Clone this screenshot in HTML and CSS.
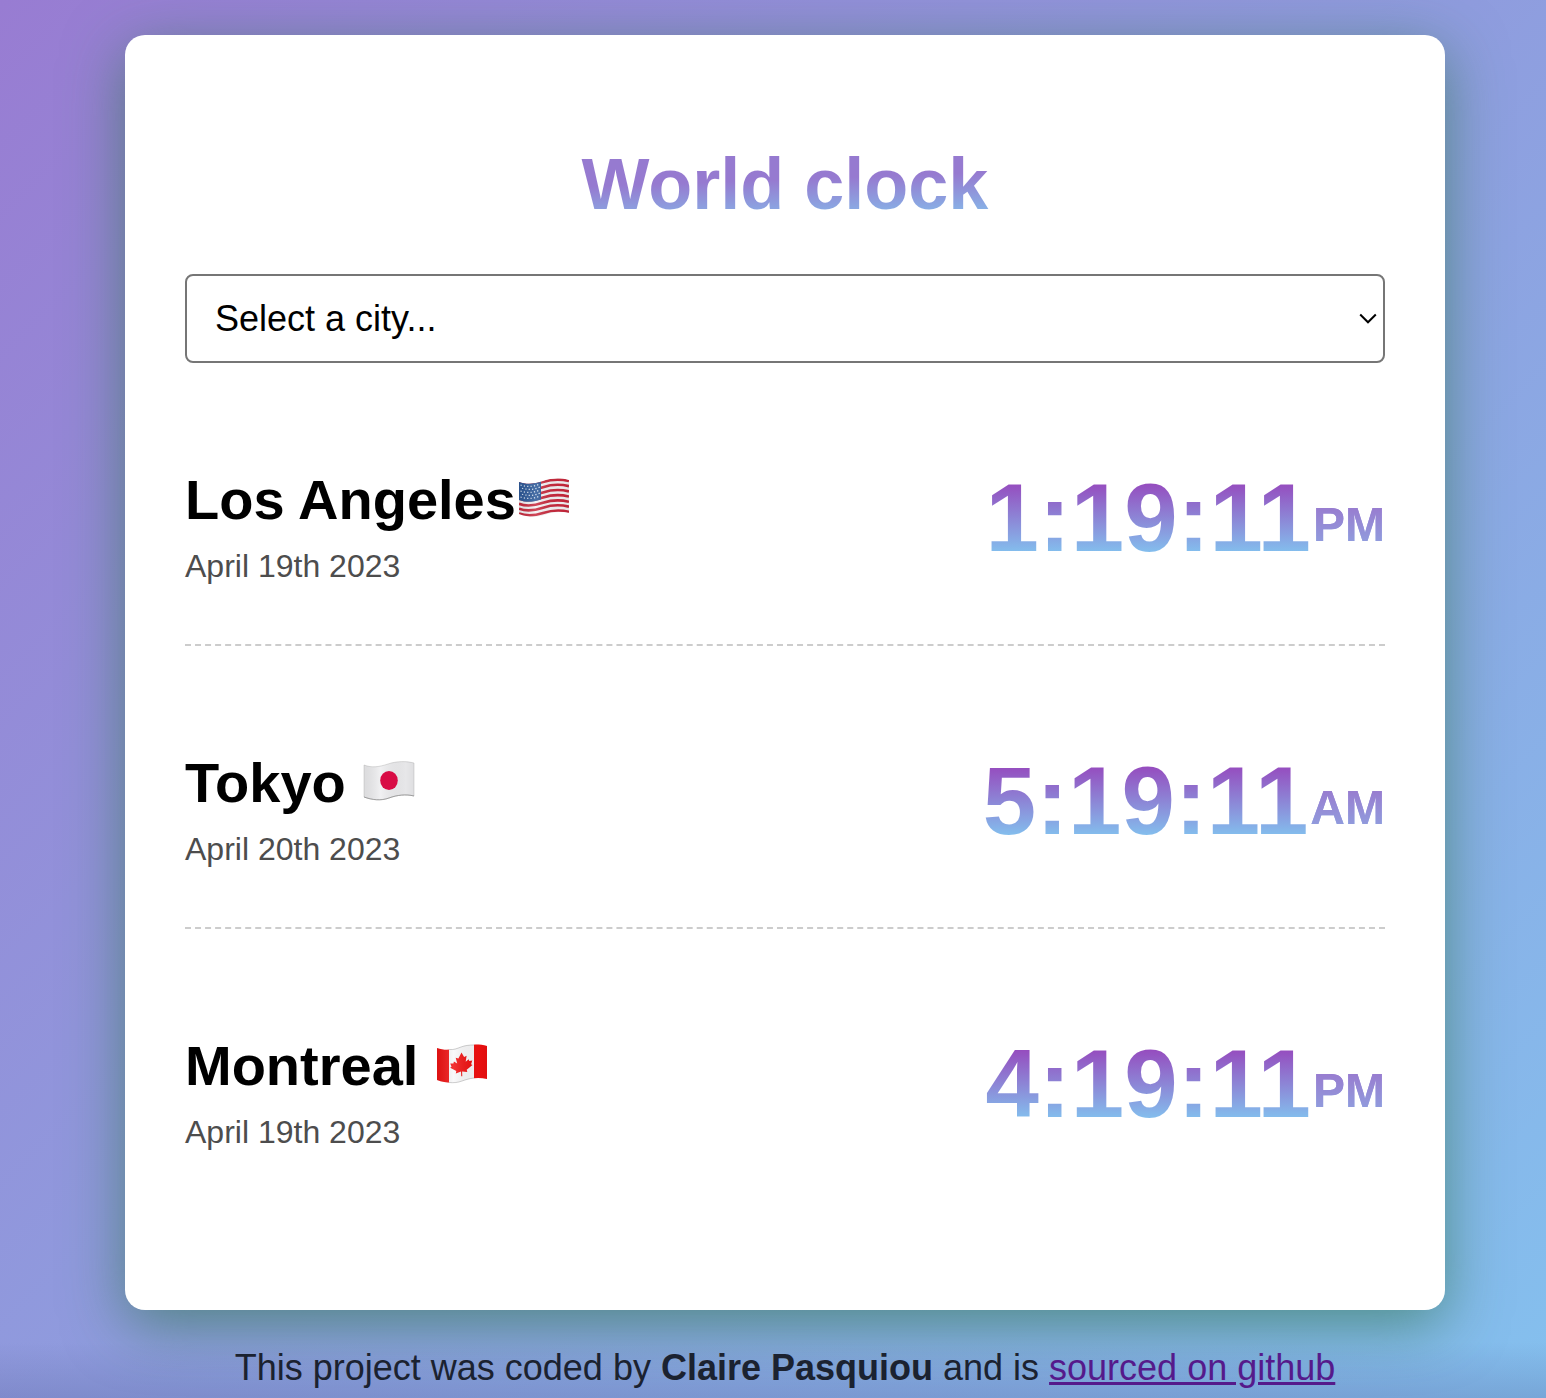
FILE: index.html
```html
<!DOCTYPE html>
<html lang="en">
<head>
  <meta charset="utf-8">
  <meta name="viewport" content="width=device-width, initial-scale=1">
  <title>World clock</title>
  <link rel="stylesheet" href="styles.css">
</head>
<body>
  <main class="card">
    <h1 class="title">World clock</h1>
    <div class="picker">
      <select class="picker-select" aria-label="Select a city">
        <option>Select a city...</option>
        <option>Los Angeles</option>
        <option>Tokyo</option>
        <option>Montreal</option>
      </select>
      <svg class="picker-arrow" viewBox="0 0 18 11" aria-hidden="true"><path d="M1.2 1.5 9 9.300l7.800-7.800" fill="none" stroke="#000" stroke-width="2"/></svg>
    </div>

    <section class="city">
      <div>
        <h2 class="city-name">Los Angeles<svg class="flag" viewBox="0 0 56 44" role="img" aria-label="United States">
          <defs>
            <clipPath id="wave"><path d="M3 7C11 10 18 9 27 6S45 3 53 5V38C45 36 36 37 28 40S11 42 3 39Z"/></clipPath>
            <linearGradient id="shade"><stop offset="0" stop-color="#000" stop-opacity=".08"/><stop offset=".35" stop-color="#fff" stop-opacity=".15"/><stop offset=".8" stop-color="#000" stop-opacity=".03"/><stop offset="1" stop-color="#000" stop-opacity=".08"/></linearGradient>
          </defs>
          <g clip-path="url(#wave)">
            <path fill="#f4f2f4" d="M0 0h56v44H0z"/>
            <g fill="none" stroke="#c8283c" stroke-width="2.600">
              <path d="M3 8C11 11 18 10 27 7S45 4 53 6"/>
              <path d="M3 13.200C11 16.200 18 15.200 27 12.200S45 9.200 53 11.200"/>
              <path d="M3 18.400C11 21.400 18 20.400 27 17.400S45 14.400 53 16.400"/>
              <path d="M3 23.600C11 26.600 18 25.600 27 22.600S45 19.600 53 21.600"/>
              <path d="M3 28.800C11 31.800 18 30.800 27 27.800S45 24.800 53 26.800"/>
              <path d="M3 33.700C11 36.700 18 35.700 27 32.700S45 29.700 53 31.700"/>
              <path d="M3 38.500C11 41.500 18 41 27 38S45 34.800 53 36.800"/>
            </g>
            <path fill="#2a5797" d="M3 6C11 9 17 9 25 6V24.500C17 27 11 28 3 25Z"/>
            <g fill="none" stroke="#dce6f3" stroke-width="1.200" stroke-dasharray="1.200 2.200">
              <path d="M4.500 10C11 12 17 12 24 9"/>
              <path d="M6 13.200C12 15 17 15 24 12"/>
              <path d="M4.500 16C11 18 17 18 24 15"/>
              <path d="M6 19.200C12 21 17 21 24 18"/>
              <path d="M4.500 22C11 24 17 24 24 21"/>
            </g>
            <path fill="url(#shade)" d="M0 0h56v44H0z"/>
          </g>
        </svg></h2>
        <div class="city-date">April 19th 2023</div>
      </div>
      <div class="city-time">1:19:11<small class="meridiem">PM</small></div>
    </section>

    <section class="city">
      <div>
        <h2 class="city-name">Tokyo <svg class="flag" viewBox="0 0 56 44" role="img" aria-label="Japan">
          <g clip-path="url(#wave)">
            <path fill="#eeeef0" d="M0 0h56v44H0z"/>
            <path fill="url(#shade)" d="M0 0h56v44H0z"/>
            <ellipse cx="28" cy="22.500" rx="8.800" ry="9.400" fill="#d80c45"/>
          </g>
          <path d="M3 7C11 10 18 9 27 6S45 3 53 5V38C45 36 36 37 28 40S11 42 3 39Z" fill="none" stroke="#aaa" stroke-opacity=".5" stroke-width=".8"/>
          <path d="M3 39C11 42 20 43 28 40S45 36 53 38" fill="none" stroke="#888" stroke-opacity=".7"/>
        </svg></h2>
        <div class="city-date">April 20th 2023</div>
      </div>
      <div class="city-time">5:19:11<small class="meridiem">AM</small></div>
    </section>

    <section class="city">
      <div>
        <h2 class="city-name">Montreal <svg class="flag" viewBox="0 0 56 44" role="img" aria-label="Canada">
          <g clip-path="url(#wave)">
            <path fill="#f8f8f9" d="M0 0h56v44H0z"/>
            <path fill="#f01010" d="M0 0h15v44H0zM40 0h16v44H40z"/>
            <path fill="#f01010" d="m27.500 11.500 2.600 4.400 2.500-1.200-.9 6.100 2.900-2.600.7 1.900 3-.5-1.200 3.700 1.400.8-5.800 4.700.6 2.200-5.200-.6.200 4.800h-1.100l-.2-4.600-5.200 1.800.5-2.300-6.100-3.400 1.300-1-1.200-3.300 3.100.1.500-1.900 3.300 1.900-1.500-5.700 2.700.7z"/>
            <path fill="url(#shade)" d="M0 0h56v44H0z"/>
          </g>
          <path d="M15 8.500C20 9 23 7.500 27 6S35 4 40 4M15 41.500C20 42 24 41.500 28 40S36 37.500 40 37" fill="none" stroke="#999" stroke-opacity=".6" stroke-width=".8"/>
        </svg></h2>
        <div class="city-date">April 19th 2023</div>
      </div>
      <div class="city-time">4:19:11<small class="meridiem">PM</small></div>
    </section>
  </main>
  <footer class="credit">This project was coded by <strong>Claire Pasquiou</strong> and is <a class="credit-link" href="#">sourced on github</a></footer>
</body>
</html>
```
FILE: styles.css
```css
* {
  box-sizing: border-box;
}

body {
  margin: 0;
  min-height: 100vh;
  padding: 35px 101px 8px 125px;
  font-family: "Liberation Sans", Arial, sans-serif;
  background:
    linear-gradient(to top, rgba(80, 90, 150, 0.25), rgba(80, 90, 150, 0) 56px),
    linear-gradient(135deg, #987cd2 0%, #8f9cde 50%, #84c0ee 100%);
}

.card {
  padding: 60px;
  border-radius: 20px;
  background: #fff;
  box-shadow: 0 15px 60px rgba(48, 118, 82, 0.65);
}

.title {
  margin: 48px 0;
  font-size: 72px;
  line-height: 83px;
  text-align: center;
  color: transparent;
  background: linear-gradient(178deg, #967ad0 46%, #84c0ec 84%);
  background-clip: text;
  -webkit-background-clip: text;
}

.picker {
  display: grid;
  align-items: center;
}

.picker-select,
.picker-arrow {
  grid-area: 1 / 1;
}

.picker-select {
  width: 100%;
  height: 89px;
  padding: 0 28px;
  appearance: none;
  border: 2px solid #767676;
  border-radius: 8px;
  background: #fff;
  color: #000;
  font: 36px "Liberation Sans", Arial, sans-serif;
}

.picker-arrow {
  justify-self: end;
  width: 18px;
  margin-right: 8px;
  pointer-events: none;
}

.city {
  display: flex;
  justify-content: space-between;
  align-items: flex-start;
  margin-top: 40px;
  padding: 60px 0;
  border-bottom: 2px dashed #ccc;
}

.city:last-child {
  margin-bottom: 40px;
  border-bottom: 0;
}

.city-name {
  margin: 0 0 12px;
  font-size: 56px;
  line-height: 74px;
}

.flag {
  width: 56px;
  height: 44px;
}

.city-date {
  font-size: 32px;
  line-height: 35px;
  color: #4d4d4d;
}

.city-time {
  font-size: 96px;
  font-weight: bold;
  line-height: 110px;
  color: transparent;
  background: linear-gradient(#983cb8 10%, #83c0ee 82%);
  background-clip: text;
  -webkit-background-clip: text;
}

.meridiem {
  margin-left: 2px;
  font-size: 48px;
  line-height: 48px;
  vertical-align: 10px;
  background: linear-gradient(#9a74cc, #8fa3e0);
  background-clip: text;
  -webkit-background-clip: text;
}

.credit {
  margin-top: 37px;
  font-size: 36px;
  line-height: 42px;
  text-align: center;
  color: #1b2230;
}

.credit-link {
  color: #551a8b;
}
```
